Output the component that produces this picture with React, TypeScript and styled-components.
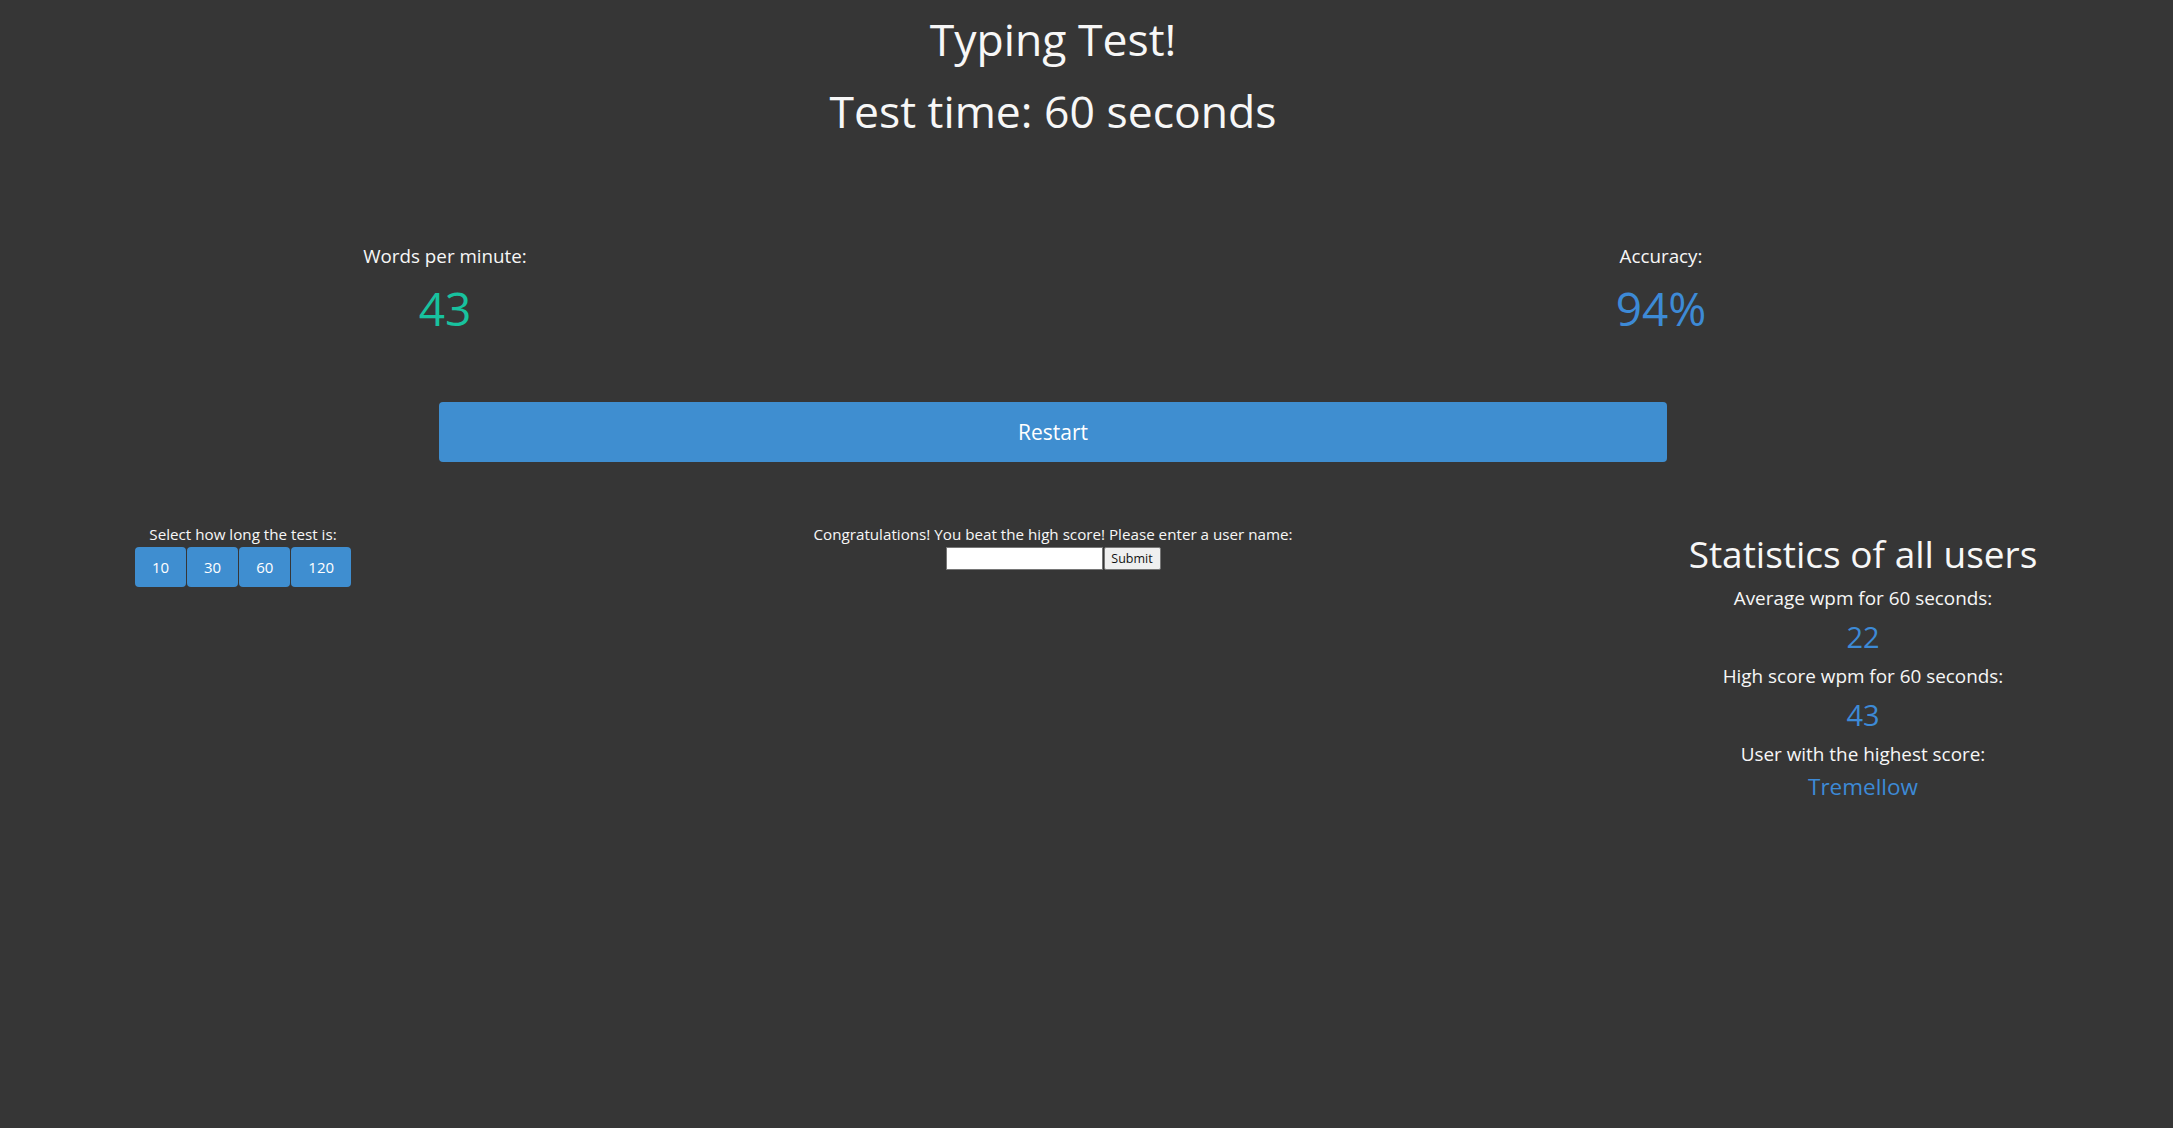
import React from 'react'
import styled, { createGlobalStyle } from 'styled-components'

const GlobalStyle = createGlobalStyle`
    html, body {
        margin: 0;
        padding: 0;
        background-color: #363636;
    }
    body {
        min-height: 1128px;
        font-family: "Segoe UI", "Open Sans", "Noto Sans", sans-serif;
        color: #f7f7f7;
    }
`

const Page = styled.div`
    width: calc(100% - 67px);
    display: flex;
    flex-direction: column;
    align-items: center;
`

const Header = styled.div`
    padding-top: 3px;
    text-align: center;
`

const Title = styled.h1`
    margin: 0;
    font-size: 44.5px;
    font-weight: 400;
    line-height: 72px;
`

const StatsRow = styled.div`
    width: 100%;
    display: grid;
    grid-template-columns: 1fr 326px 1fr;
    margin-top: 94px;
`

const Stat = styled.div<{ col: number }>`
    grid-column: ${props => props.col};
    display: flex;
    flex-direction: column;
    align-items: center;
`

const StatLabel = styled.span`
    font-size: 18.8px;
    line-height: 30px;
`

const StatValue = styled.span<{ color: string }>`
    font-size: 46px;
    line-height: 74px;
    color: ${props => props.color};
`

const RestartButton = styled.button`
    width: 1228px;
    height: 60px;
    margin-top: 57px;
    border: 0;
    border-radius: 4px;
    background: #3f8ed0;
    color: #ffffff;
    font-family: inherit;
    font-size: 21px;
    cursor: pointer;
`

const Bottom = styled.div`
    width: 100%;
    display: grid;
    grid-template-columns: 486px 1fr 486px;
    margin-top: 61px;
`

const Column = styled.div`
    display: flex;
    flex-direction: column;
    align-items: center;
`

const SmallLabel = styled.span<{ lh: number }>`
    font-size: 15.2px;
    line-height: ${props => props.lh}px;
`

const TimeButtons = styled.div`
    display: flex;
    gap: 1px;
    margin-top: 2px;
`

const TimeButton = styled.button`
    height: 40px;
    padding: 0 17px;
    border: 0;
    border-radius: 4px;
    background: #3f8ed0;
    color: #ffffff;
    font-family: inherit;
    font-size: 15px;
    cursor: pointer;
`

const NameForm = styled.div`
    display: flex;
    margin-top: 1px;
`

const NameInput = styled.input`
    box-sizing: border-box;
    width: 157px;
    height: 23px;
    margin: 0;
    border: 1px solid #767676;
    background: #ffffff;
`

const SubmitButton = styled.button`
    box-sizing: border-box;
    width: 57px;
    height: 23px;
    margin: 0 0 0 1px;
    padding: 0;
    border: 1px solid #767676;
    border-radius: 2px;
    background: #efefef;
    color: #111111;
    font-family: inherit;
    font-size: 12.5px;
`

const StatsHeading = styled.h2`
    margin: 6px 0 0;
    font-size: 37px;
    font-weight: 400;
    line-height: 50px;
`

const StatsText = styled.span`
    font-size: 18.9px;
    line-height: 38px;
`

const StatsNumber = styled.span<{ size: string, lh: string }>`
    font-size: ${props => props.size};
    line-height: ${props => props.lh};
    color: #3d8ad6;
`

const App = () => {
    return (
        <>
            <GlobalStyle />
            <Page>
                <Header>
                    <Title>Typing Test!</Title>
                    <Title>Test time: 60 seconds</Title>
                </Header>

                <StatsRow>
                    <Stat col={1}>
                        <StatLabel>Words per minute:</StatLabel>
                        <StatValue color='#18c29f'>43</StatValue>
                    </Stat>
                    <Stat col={3}>
                        <StatLabel>Accuracy:</StatLabel>
                        <StatValue color='#3d8ad6'>94%</StatValue>
                    </Stat>
                </StatsRow>

                <RestartButton>Restart</RestartButton>

                <Bottom>
                    <Column>
                        <SmallLabel lh={22}>Select how long the test is:</SmallLabel>
                        <TimeButtons>
                            <TimeButton>10</TimeButton>
                            <TimeButton>30</TimeButton>
                            <TimeButton>60</TimeButton>
                            <TimeButton>120</TimeButton>
                        </TimeButtons>
                    </Column>

                    <Column>
                        <SmallLabel lh={23}>Congratulations! You beat the high score! Please enter a user name:</SmallLabel>
                        <NameForm>
                            <NameInput type='text' />
                            <SubmitButton>Submit</SubmitButton>
                        </NameForm>
                    </Column>

                    <Column>
                        <StatsHeading>Statistics of all users</StatsHeading>
                        <StatsText>Average wpm for 60 seconds:</StatsText>
                        <StatsNumber size='29px' lh='40px'>22</StatsNumber>
                        <StatsText>High score wpm for 60 seconds:</StatsText>
                        <StatsNumber size='29px' lh='40px'>43</StatsNumber>
                        <StatsText>User with the highest score:</StatsText>
                        <StatsNumber size='22.5px' lh='28px'>Tremellow</StatsNumber>
                    </Column>
                </Bottom>
            </Page>
        </>
    )
}

export default App
